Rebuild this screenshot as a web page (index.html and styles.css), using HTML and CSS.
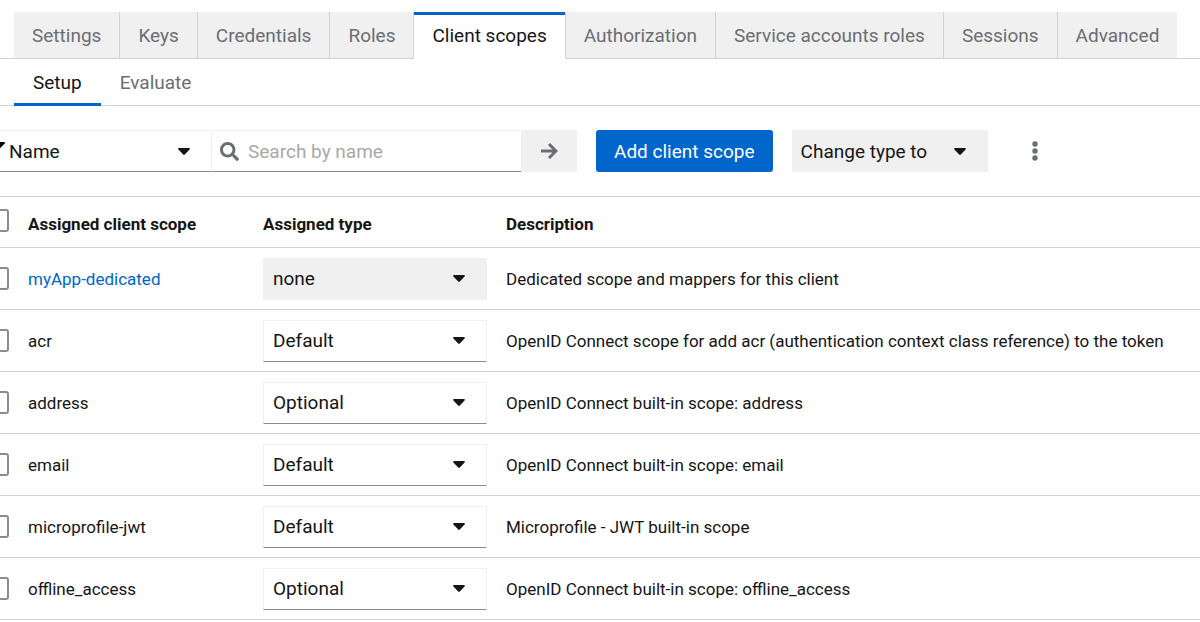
FILE: index.html
```html
<!DOCTYPE html>
<html lang="en">
<head>
    <meta charset="UTF-8">
    <meta name="viewport" content="width=device-width, initial-scale=1.0">
    <title>Client scopes</title>
    <link rel="stylesheet" href="styles.css">
</head>
<body>
    <!-- Shared icons -->
    <svg class="icon-defs" aria-hidden="true">
        <symbol id="caret" viewBox="0 0 12 7">
            <path d="M1 0h10c.8 0 1.2.9.6 1.5L6.8 6.600c-.5.500-1.100.500-1.600 0L.4 1.500C-.2.900.2 0 1 0z"/>
        </symbol>
    </svg>

    <div class="page">
        <!-- Main tabs -->
        <nav class="tabs">
            <button class="tab">Settings</button>
            <button class="tab">Keys</button>
            <button class="tab">Credentials</button>
            <button class="tab">Roles</button>
            <button class="tab active">Client scopes</button>
            <button class="tab">Authorization</button>
            <button class="tab">Service accounts roles</button>
            <button class="tab">Sessions</button>
            <button class="tab">Advanced</button>
        </nav>

        <!-- Secondary tabs -->
        <nav class="subtabs">
            <button class="subtab active">Setup</button>
            <button class="subtab">Evaluate</button>
        </nav>

        <!-- Toolbar -->
        <div class="toolbar">
            <div class="search-group">
                <div class="select filter-select">
                    <svg class="filter-icon" viewBox="0 0 512 512" aria-hidden="true"><path d="M488 0H24C3 0-8 26 7 41l185 185v206c0 8 4 15 10 20l80 56c16 11 38 0 38-20V226L505 41c15-15 4-41-17-41z"/></svg>
                    <select aria-label="Filter by">
                        <option>Name</option>
                        <option>Assigned type</option>
                    </select>
                    <svg class="caret"><use href="#caret"/></svg>
                </div>
                <div class="search">
                    <svg class="search-icon" viewBox="0 0 512 512" aria-hidden="true"><path d="M505 442.700L405.300 343c-4.500-4.500-10.600-7-17-7H372c27.600-35.300 44-79.700 44-128C416 93.100 322.900 0 208 0S0 93.100 0 208s93.100 208 208 208c48.300 0 92.700-16.400 128-44v16.300c0 6.400 2.500 12.500 7 17l99.700 99.700c9.400 9.400 24.600 9.400 33.900 0l28.300-28.300c9.400-9.400 9.400-24.600.1-34zM208 336c-70.700 0-128-57.200-128-128 0-70.700 57.200-128 128-128 70.700 0 128 57.200 128 128 0 70.700-57.200 128-128 128z"/></svg>
                    <input type="text" placeholder="Search by name" aria-label="Search by name">
                </div>
                <button class="search-button" aria-label="Search">
                    <svg viewBox="0 0 18 18" aria-hidden="true"><path d="M1 9h15M9 2l7 7-7 7"/></svg>
                </button>
            </div>
            <button class="add-button">Add client scope</button>
            <button class="type-button">Change type to <svg class="caret"><use href="#caret"/></svg></button>
            <button class="kebab" aria-label="Actions">
                <svg viewBox="0 0 6 20" aria-hidden="true"><circle cx="3" cy="3" r="2.700"/><circle cx="3" cy="10" r="2.700"/><circle cx="3" cy="17" r="2.700"/></svg>
            </button>
        </div>

        <!-- Client scopes table -->
        <table class="scopes">
            <thead>
                <tr>
                    <th class="check"><input type="checkbox" aria-label="Select all"></th>
                    <th class="name">Assigned client scope</th>
                    <th class="type">Assigned type</th>
                    <th>Description</th>
                </tr>
            </thead>
            <tbody>
                <tr>
                    <td class="check"><input type="checkbox" aria-label="Select myApp-dedicated"></td>
                    <td><a href="#">myApp-dedicated</a></td>
                    <td><div class="select disabled"><select aria-label="Assigned type" disabled><option>none</option></select><svg class="caret"><use href="#caret"/></svg></div></td>
                    <td>Dedicated scope and mappers for this client</td>
                </tr>
                <tr>
                    <td class="check"><input type="checkbox" aria-label="Select acr"></td>
                    <td>acr</td>
                    <td><div class="select"><select aria-label="Assigned type"><option>Default</option><option>Optional</option></select><svg class="caret"><use href="#caret"/></svg></div></td>
                    <td>OpenID Connect scope for add acr (authentication context class reference) to the token</td>
                </tr>
                <tr>
                    <td class="check"><input type="checkbox" aria-label="Select address"></td>
                    <td>address</td>
                    <td><div class="select"><select aria-label="Assigned type"><option>Optional</option><option>Default</option></select><svg class="caret"><use href="#caret"/></svg></div></td>
                    <td>OpenID Connect built-in scope: address</td>
                </tr>
                <tr>
                    <td class="check"><input type="checkbox" aria-label="Select email"></td>
                    <td>email</td>
                    <td><div class="select"><select aria-label="Assigned type"><option>Default</option><option>Optional</option></select><svg class="caret"><use href="#caret"/></svg></div></td>
                    <td>OpenID Connect built-in scope: email</td>
                </tr>
                <tr>
                    <td class="check"><input type="checkbox" aria-label="Select microprofile-jwt"></td>
                    <td>microprofile-jwt</td>
                    <td><div class="select"><select aria-label="Assigned type"><option>Default</option><option>Optional</option></select><svg class="caret"><use href="#caret"/></svg></div></td>
                    <td>Microprofile - JWT built-in scope</td>
                </tr>
                <tr>
                    <td class="check"><input type="checkbox" aria-label="Select offline_access"></td>
                    <td>offline_access</td>
                    <td><div class="select"><select aria-label="Assigned type"><option>Optional</option><option>Default</option></select><svg class="caret"><use href="#caret"/></svg></div></td>
                    <td>OpenID Connect built-in scope: offline_access</td>
                </tr>
            </tbody>
        </table>
    </div>
</body>
</html>
```
FILE: styles.css
```css
* {
    box-sizing: border-box;
}

body {
    margin: 0;
    font-family: Roboto, "Liberation Sans", sans-serif;
    font-size: 17px;
    color: #151515;
    background-color: white;
    overflow-x: hidden;
}

button, select, input {
    font-family: inherit;
    font-size: 19px;
    color: inherit;
    margin: 0;
    border: none;
    border-radius: 0;
}

button {
    background-color: transparent;
    padding: 0;
    cursor: pointer;
    white-space: nowrap;
}

a {
    color: #0066cc;
    text-decoration: none;
}

a:hover {
    text-decoration: underline;
}

.icon-defs {
    display: none;
}

.page {
    margin-left: -14px;
    padding-top: 12px;
}

/* Tabs */
.tabs {
    display: flex;
    padding-left: 28px;
    border-bottom: 1px solid #d2d2d2;
}

.tab {
    height: 47px;
    padding: 0 18px;
    margin-bottom: -1px;
    color: #6a6e73;
    background-color: #f0f0f0;
    border-right: 1px solid #d2d2d2;
    border-bottom: 1px solid #d2d2d2;
}

.tab:last-child {
    border-right: none;
}

.tab.active {
    color: #151515;
    background-color: white;
    border-bottom-color: white;
    box-shadow: inset 0 3px #0066cc;
}

.subtabs {
    display: flex;
    padding-left: 28px;
    border-bottom: 1px solid #d2d2d2;
}

.subtab {
    height: 47px;
    padding: 0 19px;
    margin-bottom: -1px;
    color: #6a6e73;
}

.subtab.active {
    color: #151515;
    box-shadow: inset 0 -3px #0066cc;
}

/* Toolbar */
.toolbar {
    display: flex;
    align-items: center;
    padding: 24px 0;
}

.search-group {
    display: flex;
    margin-right: 19px;
}

.select {
    display: grid;
    align-items: center;
}

.select > * {
    grid-area: 1 / 1;
}

.select select {
    appearance: none;
    width: 100%;
    height: 42px;
    padding: 0 40px 0 9px;
    background-color: white;
    border: 1px solid #f0f0f0;
    border-bottom-color: #8a8d90;
    opacity: 1;
}

.select.disabled select {
    background-color: #f0f0f0;
    border-bottom-color: #f0f0f0;
    color: #151515;
}

.caret {
    width: 12px;
    height: 7px;
    fill: #151515;
}

.select .caret {
    justify-self: end;
    margin-right: 22px;
    pointer-events: none;
}

.filter-select {
    width: 226px;
}

.filter-select select {
    padding-left: 22px;
}

.filter-icon {
    z-index: 1;
    width: 19px;
    height: 19px;
    pointer-events: none;
}

.search {
    display: flex;
    align-items: center;
    gap: 9px;
    width: 309px;
    padding-left: 8px;
    border-top: 1px solid #f0f0f0;
    border-bottom: 1px solid #8a8d90;
}

.search-icon {
    width: 19px;
    height: 19px;
    fill: #6a6e73;
}

.search input {
    flex: 1;
    min-width: 0;
    padding: 0;
    outline: none;
}

.search input::placeholder {
    color: #a9a9a9;
}

.search-button {
    display: flex;
    align-items: center;
    justify-content: center;
    width: 56px;
    background-color: #f0f0f0;
}

.search-button svg {
    width: 18px;
    height: 18px;
    fill: none;
    stroke: #6a6e73;
    stroke-width: 3;
}

.add-button {
    height: 42px;
    padding: 0 18px;
    margin-right: 19px;
    color: white;
    background-color: #0066cc;
    border-radius: 3px;
}

.type-button {
    display: flex;
    align-items: center;
    gap: 27px;
    height: 42px;
    padding: 0 22px 0 9px;
    background-color: #f0f0f0;
}

.kebab {
    display: flex;
    padding: 0 19px;
    margin-left: 25px;
}

.kebab svg {
    width: 6px;
    height: 20px;
    fill: #6a6e73;
}

/* Table */
.scopes {
    width: 100%;
    border-collapse: collapse;
    table-layout: fixed;
    border-top: 1px solid #d2d2d2;
}

.scopes th, .scopes td {
    height: 62px;
    padding: 0 19px 0 0;
    border-bottom: 1px solid #d2d2d2;
    text-align: left;
}

.scopes th {
    height: 51px;
    padding-top: 4px;
    font-weight: bold;
}

.scopes .check {
    width: 42px;
}

.scopes th.check {
    padding: 0 0 4px;
}

.scopes .name {
    width: 235px;
}

.scopes .type {
    width: 243px;
}

.check input {
    appearance: none;
    display: block;
    width: 23px;
    height: 23px;
    background-color: white;
    border: 2px solid #8a8d90;
    border-radius: 3px;
}

.check input:checked {
    background-color: #0066cc;
}
```
